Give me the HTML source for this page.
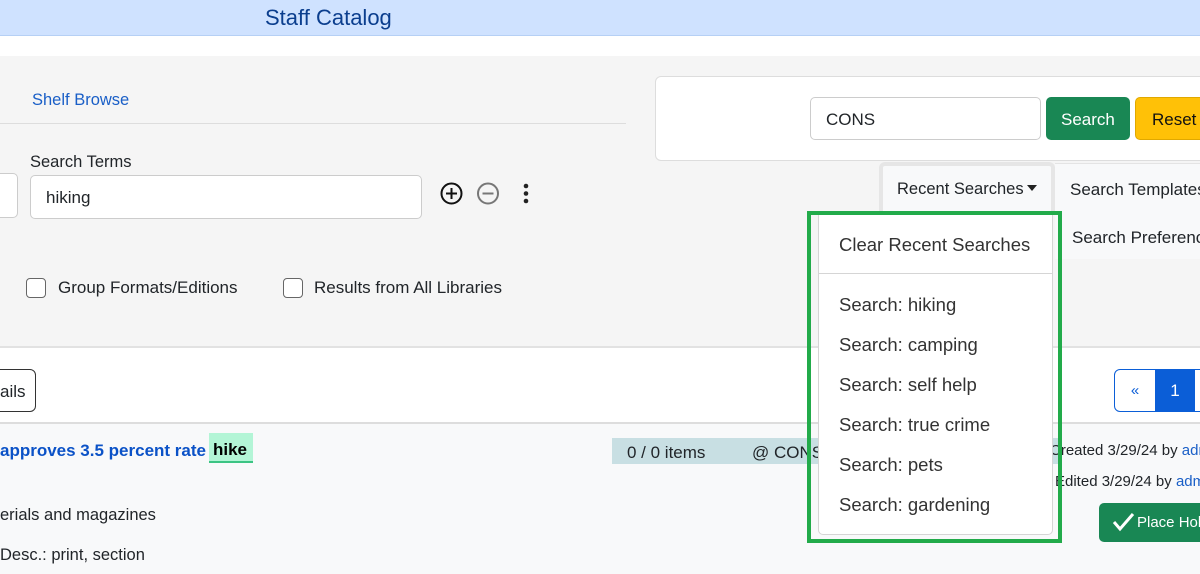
<!DOCTYPE html>
<html><head><meta charset="utf-8"><style>
*{box-sizing:border-box;margin:0;padding:0}
body{width:1200px;height:574px;overflow:hidden;position:relative;background:#fff;font-family:"Liberation Sans",sans-serif;color:#212529;font-size:17px}
.a{position:absolute;white-space:nowrap}
.dd{z-index:10}
</style></head><body>
<div class="a" style="left:0;top:0;width:1200px;height:36px;background:#cfe2ff;border-bottom:1px solid #b6d0f5"></div>
<div class="a" style="left:265px;top:5px;font-size:22px;color:#0b3e8e">Staff Catalog</div>
<div class="a" style="left:0;top:56px;width:1200px;height:292px;background:#f5f5f5;border-bottom:2px solid #e2e2e2"></div>
<div class="a" style="left:32px;top:91px;color:#1a5fc7;font-size:16.5px">Shelf Browse</div>
<div class="a" style="left:0;top:123px;width:626px;height:1px;background:#ddd"></div>
<div class="a" style="left:30px;top:153px;font-size:16.5px">Search Terms</div>
<div class="a" style="left:-10px;top:173px;width:28px;height:45px;background:#fff;border:1px solid #ccc;border-radius:5px"></div>
<div class="a" style="left:30px;top:175px;width:392px;height:44px;background:#fff;border:1px solid #ccc;border-radius:5px;padding:12px 15px">hiking</div>
<svg class="a" style="left:439px;top:181px" width="100" height="26">
<circle cx="12.5" cy="12.5" r="10" fill="none" stroke="#111" stroke-width="2"/><path d="M12.5 7v11M7 12.5h11" stroke="#111" stroke-width="2"/>
<circle cx="49" cy="12.5" r="10" fill="none" stroke="#777" stroke-width="2"/><path d="M43.5 12.5h11" stroke="#777" stroke-width="2"/>
<circle cx="87" cy="5" r="2.3" fill="#222"/><circle cx="87" cy="12.5" r="2.3" fill="#222"/><circle cx="87" cy="20" r="2.3" fill="#222"/>
</svg>
<div class="a" style="left:26px;top:278px;width:20px;height:20px;border:1.5px solid #666;border-radius:4px;background:#fff"></div>
<div class="a" style="left:58px;top:278px">Group Formats/Editions</div>
<div class="a" style="left:283px;top:278px;width:20px;height:20px;border:1.5px solid #666;border-radius:4px;background:#fff"></div>
<div class="a" style="left:314px;top:278px">Results from All Libraries</div>

<div class="a" style="left:655px;top:76px;width:560px;height:85px;background:#fff;border:1px solid #ddd;border-radius:6px"></div>
<div class="a" style="left:810px;top:97px;width:231px;height:43px;background:#fff;border:1px solid #ccc;border-radius:5px;padding:12px 15px">CONS</div>
<div class="a" style="left:1046px;top:97px;width:84px;height:43px;background:#198754;border-radius:5px;color:#fff;padding:13px 0 0 15px">Search</div>
<div class="a" style="left:1135px;top:97px;width:80px;height:43px;background:#ffc107;border:1px solid #e0a800;border-radius:5px;color:#111;padding:12px 0 0 16px">Reset</div>

<div class="a" style="left:1055px;top:163px;width:150px;height:96px;background:#f8f9fa;border-top:1px solid #e4e4e4"></div>
<div class="a" style="left:879px;top:162px;width:176px;height:50px;background:#f8f9fa;border:4px solid #e6e6e6;border-bottom:none;border-radius:6px 6px 0 0"></div>
<div class="a" style="left:897px;top:180px;font-size:16.5px">Recent Searches</div>
<svg class="a" style="left:1027px;top:185px" width="10" height="6"><path d="M0 0h10L5 6z" fill="#222"/></svg>
<div class="a" style="left:1070px;top:180px">Search Templates</div>
<div class="a" style="left:1072px;top:228px">Search Preferences</div>

<div class="a" style="left:0;top:422px;width:1200px;height:152px;background:#f8f9fa;border-top:2px solid #ddd"></div>
<div class="a" style="left:-10px;top:369px;width:46px;height:43px;border:1px solid #333;border-radius:6px;padding:12px 0 0 9px">ails</div>
<div class="a" style="left:1114px;top:369px;width:100px;height:43px;border:1px solid #0b5ed7;border-radius:6px;overflow:hidden;background:#fff">
<div class="a" style="left:0;top:0;width:40px;height:43px;color:#0b5ed7;font-size:15px;padding-top:12px;text-align:center">«</div>
<div class="a" style="left:40px;top:0;width:40px;height:43px;background:#0b5ed7;color:#fff;padding-top:11px;text-align:center">1</div></div>
<div class="a" style="left:0;top:441px;font-weight:bold;color:#0b52c7">approves 3.5 percent rate</div>
<div class="a" style="left:209px;top:433px;width:44px;height:30px;background:#b3f5d6;border-bottom:2px solid #3cc483;font-weight:bold;color:#000;padding:7px 0 0 4px">hike</div>
<div class="a" style="left:612px;top:438px;width:448px;height:26px;background:#c8dfe3"></div>
<div class="a" style="left:627px;top:443px">0 / 0 items</div>
<div class="a" style="left:752px;top:443px">@ CONS</div>
<div class="a" style="left:1050px;top:442px;font-size:15px">Created 3/29/24 by <span style="color:#1a5fc7">admin</span></div>
<div class="a" style="left:1055px;top:473px;font-size:15px">Edited 3/29/24 by <span style="color:#1a5fc7">admin</span></div>
<div class="a" style="left:1099px;top:503px;width:120px;height:39px;background:#198754;border-radius:5px;color:#fff;font-size:15px;padding:11px 0 0 38px">Place Hold</div>
<svg class="a" style="left:1112px;top:512px" width="24" height="20"><path d="M2 10l6 7L21 2" fill="none" stroke="#fff" stroke-width="3"/></svg>
<div class="a" style="left:0;top:506px;font-size:16.5px">erials and magazines</div>
<div class="a" style="left:0;top:546px;font-size:16.5px">Desc.: print, section</div>

<div class="a dd" style="left:818px;top:213px;width:235px;height:322px;background:#fff;border:1px solid #d5d5d5;border-top:none;border-radius:0 0 5px 5px"></div>
<div class="a dd" style="left:807px;top:211px;width:255px;height:332px;border:4px solid #22ab4a"></div>
<div class="a dd" style="left:818px;top:273px;width:235px;height:1px;background:#d5d5d5"></div>
<div class="a dd" style="left:839px;top:234px;font-size:18.5px;color:#333">Clear Recent Searches</div>
<div class="a dd" style="left:839px;top:285px;font-size:18.5px;color:#333;line-height:40px">Search: hiking<br>Search: camping<br>Search: self help<br>Search: true crime<br>Search: pets<br>Search: gardening</div>
</body></html>
